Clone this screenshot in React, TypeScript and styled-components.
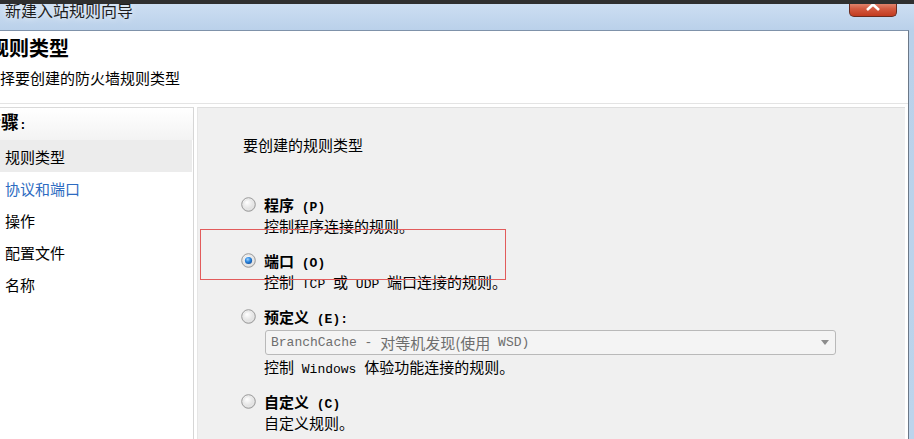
import styled, { createGlobalStyle } from 'styled-components';

const GlobalStyle = createGlobalStyle`
	html, body {
		margin: 0;
		padding: 0;
		overflow: hidden;
	}
	body {
		background: #bcd4ec;
		font-family: "Noto Sans CJK SC", "Liberation Sans", sans-serif;
		color: #000;
	}
`;

const steps = [
	{ label: '规则类型', active: true, link: false },
	{ label: '协议和端口', active: false, link: true },
	{ label: '操作', active: false, link: false },
	{ label: '配置文件', active: false, link: false },
	{ label: '名称', active: false, link: false },
];

function Radio({ checked }: { checked?: boolean }) {
	return (
		<RadioSVG viewBox='0 0 15 15' width={15} height={15}>
			<defs>
				<radialGradient id='rface' cx='0.4' cy='0.35' r='0.7'>
					<stop offset='0' stopColor='#ffffff' />
					<stop offset='1' stopColor='#d4d4d4' />
				</radialGradient>
				<radialGradient id='rdot' cx='0.4' cy='0.35' r='0.7'>
					<stop offset='0' stopColor='#9fd3ff' />
					<stop offset='0.5' stopColor='#2b86de' />
					<stop offset='1' stopColor='#0f4f9e' />
				</radialGradient>
			</defs>
			<circle cx='7.5' cy='7.5' r='6.8' fill='url(#rface)' stroke='#9a9a9a' strokeWidth='1' />
			<circle cx='7.5' cy='7.5' r='5' fill='none' stroke='#e9e9e9' strokeWidth='1' />
			{checked && <circle cx='7.5' cy='7.5' r='3.6' fill='url(#rdot)' />}
		</RadioSVG>
	);
}

function App() {
	return (
		<Frame>
			<GlobalStyle />
			<TitleBar>
				新建入站规则向导
				<CloseButton>
					<svg width='16' height='12' viewBox='0 0 16 12'>
						<path d='M2 10 L8 4.5 L14 10' stroke='#fff' strokeWidth='2.6' fill='none' />
					</svg>
				</CloseButton>
			</TitleBar>
			<Body>
				<Content>
					<Header>
						<Heading>规则类型</Heading>
						<Subtitle>选择要创建的防火墙规则类型</Subtitle>
					</Header>
					<Panels>
						<StepsPanel>
							<StepsHeader>
								<StepsTitle>
									步骤<L>:</L>
								</StepsTitle>
							</StepsHeader>
							{steps.map((s) => (
								<StepItem key={s.label} active={s.active} link={s.link}>
									{s.label}
								</StepItem>
							))}
						</StepsPanel>
						<MainPanel>
							<Prompt>要创建的规则类型</Prompt>
							<OptionList>
								<Option>
									<Radio />
									<OptionTitle>
										程序<L> (P)</L>
									</OptionTitle>
									<OptionDesc>控制程序连接的规则。</OptionDesc>
								</Option>
								<Option>
									<Radio checked />
									<OptionTitle>
										端口<L> (O)</L>
									</OptionTitle>
									<OptionDesc>
										控制<L> TCP </L>或<L> UDP </L>端口连接的规则。
									</OptionDesc>
								</Option>
								<Option>
									<Radio />
									<OptionTitle>
										预定义<L> (E):</L>
									</OptionTitle>
									<Dropdown>
										<L>BranchCache - </L>对等机发现(使用<L> WSD)</L>
										<DropArrow />
									</Dropdown>
									<OptionDesc>
										控制<L> Windows </L>体验功能连接的规则。
									</OptionDesc>
								</Option>
								<Option>
									<Radio />
									<OptionTitle>
										自定义<L> (C)</L>
									</OptionTitle>
									<OptionDesc>自定义规则。</OptionDesc>
								</Option>
							</OptionList>
							<Highlight />
						</MainPanel>
					</Panels>
				</Content>
			</Body>
		</Frame>
	);
}

const Frame = styled.div`
	position: relative;
	width: 914px;
	height: 439px;
	display: flex;
	flex-direction: column;
	background: linear-gradient(#cfe0f3, #bad1ea 30px, #bcd4ec);
	overflow: hidden;

	&::before {
		content: '';
		position: absolute;
		top: 0;
		left: 0;
		right: 0;
		height: 4px;
		background: #2f2f2f;
		z-index: 3;
	}
`;

const TitleBar = styled.div`
	position: relative;
	flex-shrink: 0;
	height: 30px;
	box-sizing: border-box;
	padding: 1px 0 0 5px;
	font-size: 16px;
	line-height: 18px;
	color: #1c1c1c;
	text-shadow: 0 0 6px rgba(255, 255, 255, 0.9);
`;

const CloseButton = styled.div`
	position: absolute;
	top: 0;
	right: 17px;
	width: 48px;
	height: 17px;
	box-sizing: border-box;
	border: 1px solid #6a2b1f;
	border-top: none;
	border-radius: 0 0 5px 5px;
	background: linear-gradient(#e9a490, #d45a40 55%, #c23b20);
	display: flex;
	justify-content: center;
	align-items: flex-start;

	svg {
		display: block;
	}
`;

const Body = styled.div`
	flex: 1;
	min-height: 0;
	display: flex;
	padding-right: 5px;
`;

const Content = styled.div`
	flex: 1;
	display: flex;
	flex-direction: column;
	background: #fff;
	border-top: 1px solid #7f92aa;
	border-right: 1px solid #6b7888;
`;

const Header = styled.div`
	flex-shrink: 0;
	height: 73px;
	box-sizing: border-box;
	padding-top: 5px;
	border-bottom: 1px solid #e4e4e4;
`;

const Heading = styled.h1`
	margin: 0 0 0 -11px;
	height: 24px;
	font-size: 20px;
	line-height: 24px;
	font-weight: 700;
`;

const Subtitle = styled.div`
	margin: 8px 0 0 -15px;
	height: 20px;
	font-size: 15px;
	line-height: 20px;
`;

const Panels = styled.div`
	flex: 1;
	display: flex;
	gap: 3px;
	padding: 3px 3px 0 0;
	min-height: 0;
`;

const StepsPanel = styled.div`
	width: 194px;
	box-sizing: border-box;
	display: flex;
	flex-direction: column;
	border-top: 1px solid #dadada;
	border-right: 1px solid #d6d6d6;
	background: #fff;
`;

const StepsHeader = styled.div`
	height: 32px;
	flex-shrink: 0;
	box-sizing: border-box;
	padding: 0 0 6px 0;
	display: flex;
	align-items: center;
	background: linear-gradient(#ffffff, #f3f3f3);
`;

const StepsTitle = styled.span`
	margin-left: -17px;
	font-size: 18px;
	font-weight: 700;
	white-space: nowrap;
`;

const StepItem = styled.div<{ active: boolean; link: boolean }>`
	height: 32px;
	flex-shrink: 0;
	display: flex;
	align-items: center;
	padding-left: 5px;
	font-size: 15px;
	color: ${(props) => (props.link ? '#2d6bc1' : '#000')};
	background: ${(props) => (props.active ? '#ececec' : 'transparent')};
	margin-right: 1px;
`;

const MainPanel = styled.div`
	position: relative;
	flex: 1;
	background: #f0f0f0;
	border-top: 1px solid #dedede;
	border-left: 1px solid #e6e6e6;
	padding: 27px 0 0 43px;
`;

const Prompt = styled.div`
	margin-left: 2px;
	height: 20px;
	font-size: 15px;
	line-height: 20px;
`;

const OptionList = styled.div`
	margin-top: 39px;
	display: flex;
	flex-direction: column;
	gap: 14px;
`;

const Option = styled.div`
	display: grid;
	grid-template-columns: 15px 1fr;
	column-gap: 8px;
	font-size: 15px;
	line-height: 21px;
`;

const RadioSVG = styled.svg`
	grid-column: 1;
	grid-row: 1;
	align-self: center;
	display: block;
`;

const OptionTitle = styled.div`
	grid-column: 2;
	height: 21px;
	font-weight: 700;
	white-space: nowrap;
`;

const OptionDesc = styled.div`
	grid-column: 2;
	height: 21px;
	white-space: nowrap;
`;

const Dropdown = styled.div`
	grid-column: 2;
	width: 571px;
	height: 25px;
	box-sizing: border-box;
	margin: 3px 0 1px 1px;
	padding-left: 5px;
	display: flex;
	align-items: center;
	border: 1px solid #b9b9b9;
	border-radius: 3px;
	background: #f4f4f4;
	color: #6e6e6e;
	white-space: nowrap;
`;

const DropArrow = styled.span`
	margin-left: auto;
	margin-right: 6px;
	width: 0;
	height: 0;
	border-left: 4px solid transparent;
	border-right: 4px solid transparent;
	border-top: 5px solid #8c8c8c;
`;

const L = styled.span`
	font-family: "Liberation Mono", monospace;
	font-size: 13px;
	line-height: 1;
	white-space: pre;
`;

const Highlight = styled.div`
	position: absolute;
	left: 2px;
	top: 121px;
	width: 306px;
	height: 51px;
	box-sizing: border-box;
	border: 1px solid #e25b5b;
	pointer-events: none;
`;

export default App;
